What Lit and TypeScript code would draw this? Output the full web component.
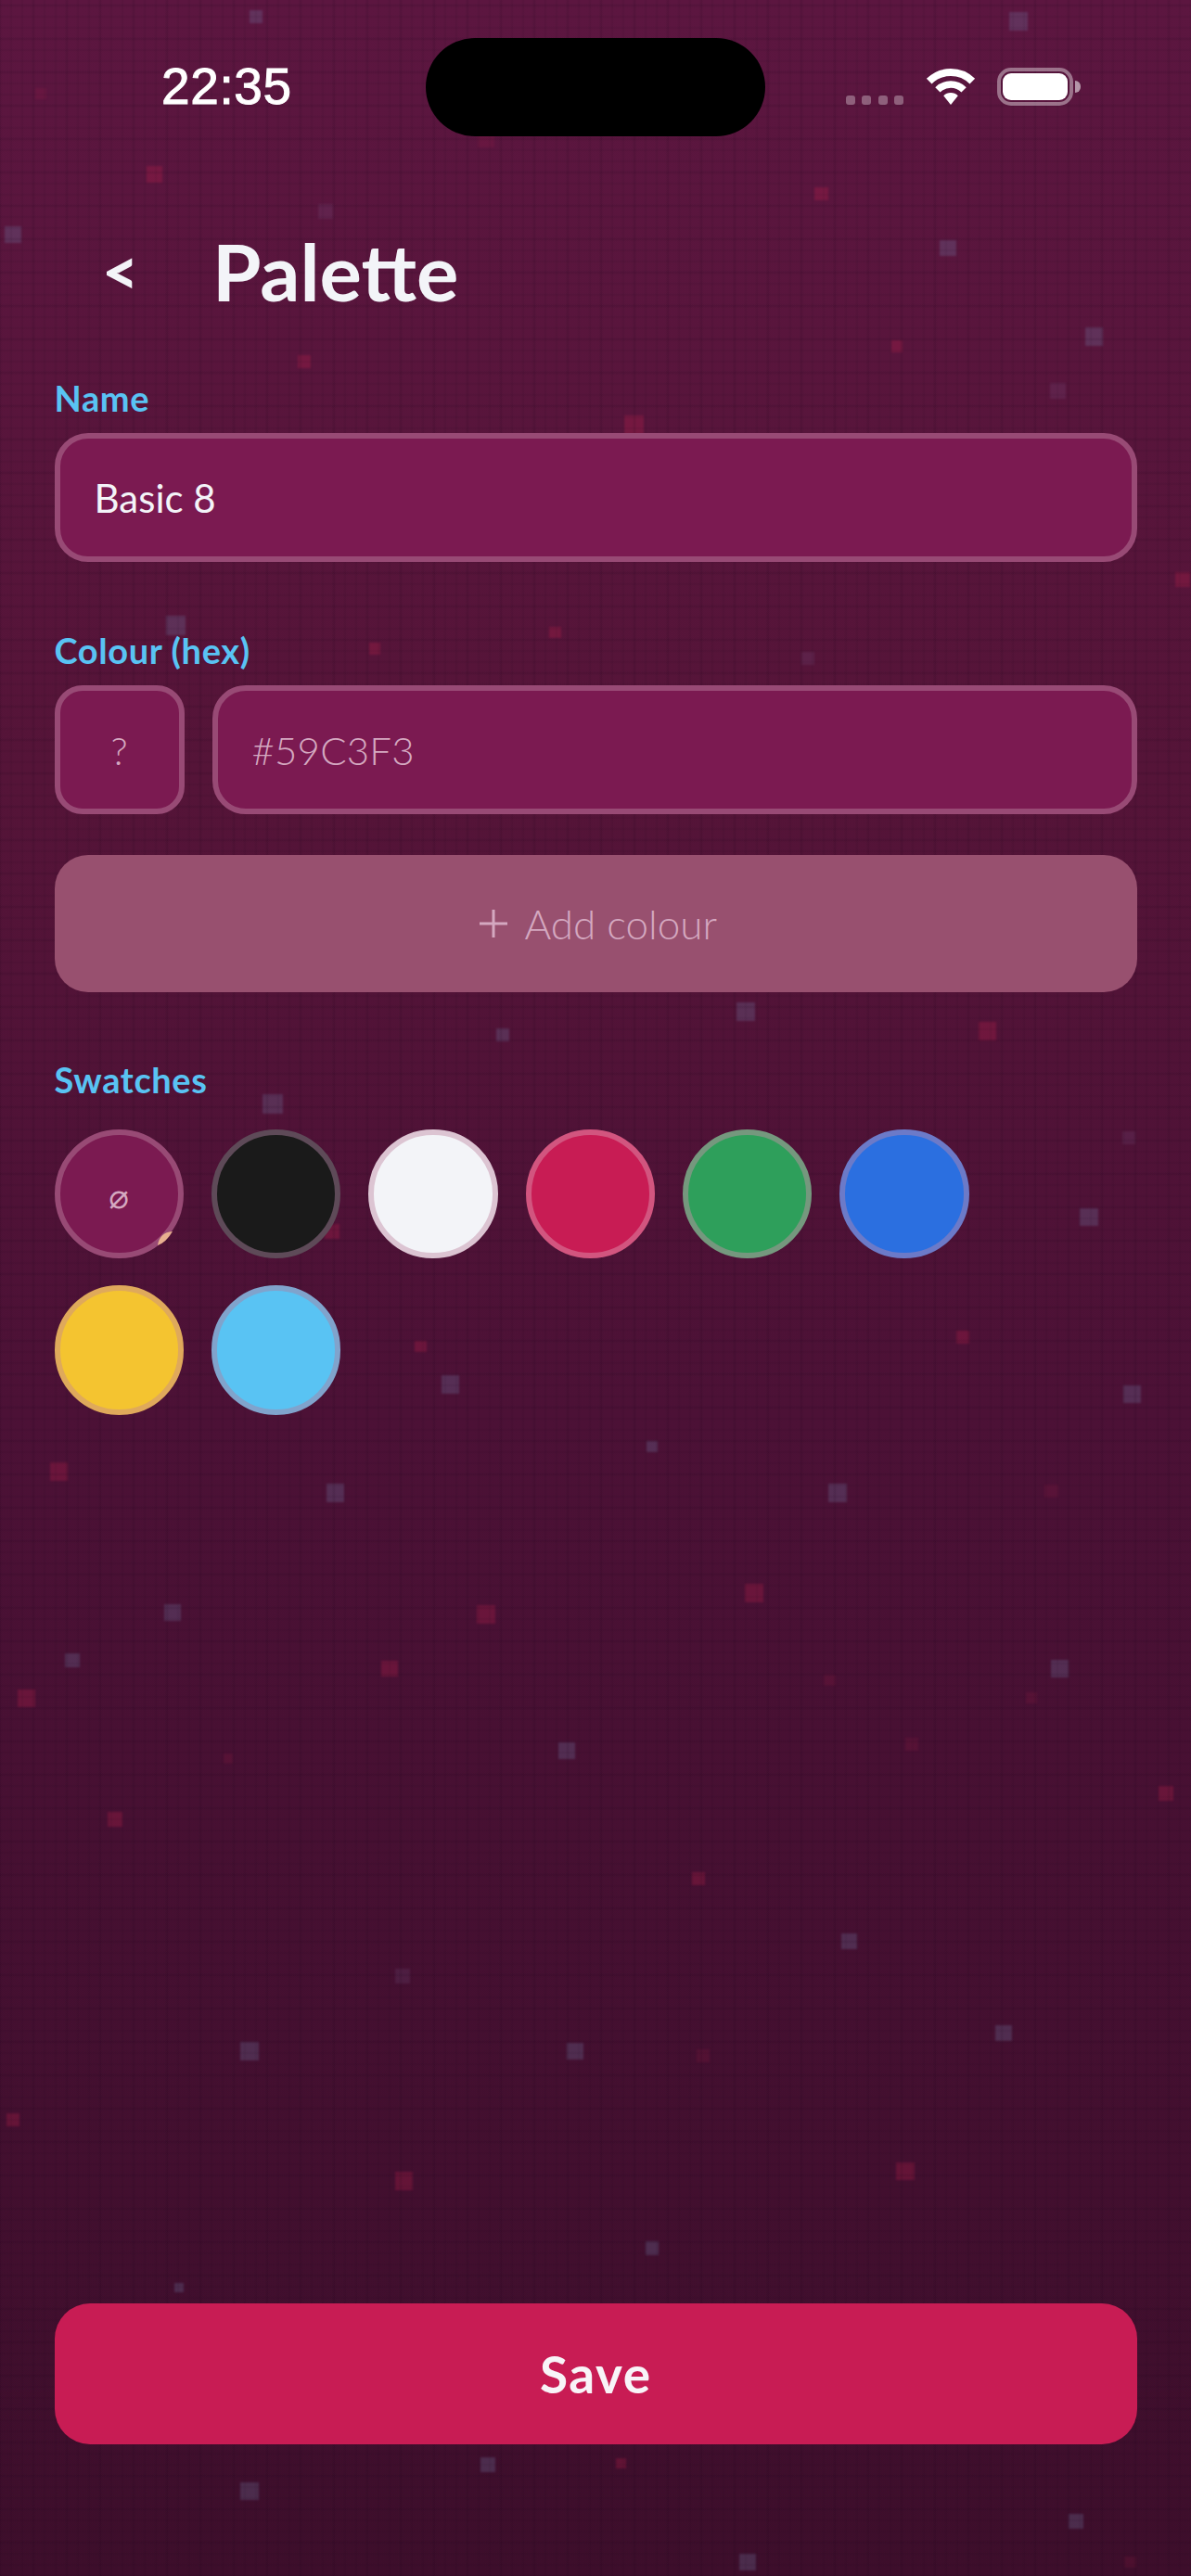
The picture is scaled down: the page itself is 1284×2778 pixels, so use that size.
import { LitElement, html, css, svg } from 'lit';
import { customElement } from 'lit/decorators.js';

// decorative squares: x, y, size as read off the 725px wide reference, then kind
const SCALE = 1284 / 725;
type Dot = [number, number, number, 'b' | 'r' | 'fb' | 'fr'];
const DOTS: Dot[] = [
  [156, 10, 8, 'b'], [620, 13, 11, 'b'], [8, 143, 10, 'b'], [577, 151, 10, 'b'], [666, 205, 11, 'b'],
  [644, 238, 10, 'fb'], [198, 129, 9, 'fb'], [107, 381, 12, 'b'], [454, 616, 11, 'b'], [306, 630, 8, 'b'],
  [166, 672, 12, 'b'], [663, 741, 11, 'b'], [689, 849, 11, 'b'], [274, 843, 11, 'b'], [397, 881, 7, 'b'],
  [204, 909, 11, 'b'], [510, 909, 11, 'b'], [105, 982, 10, 'b'], [44, 1011, 9, 'b'], [645, 1016, 11, 'b'],
  [345, 1066, 10, 'b'], [517, 1182, 10, 'b'], [152, 1249, 11, 'b'], [350, 1249, 10, 'b'], [611, 1238, 10, 'b'],
  [245, 1203, 9, 'fb'], [397, 1369, 8, 'b'], [109, 1393, 6, 'b'], [297, 1501, 9, 'b'], [152, 1517, 11, 'b'],
  [655, 1535, 9, 'b'], [455, 1560, 10, 'b'], [687, 693, 8, 'fb'], [492, 401, 8, 'fb'], [295, 52, 7, 'fb'],
  [25, 57, 7, 'fr'], [94, 106, 10, 'r'], [296, 85, 10, 'fr'], [500, 118, 8, 'r'], [546, 211, 7, 'r'],
  [185, 220, 8, 'r'], [386, 259, 12, 'r'], [720, 353, 9, 'r'], [228, 395, 7, 'r'], [338, 385, 7, 'r'],
  [601, 628, 11, 'r'], [586, 814, 8, 'r'], [256, 820, 7, 'r'], [36, 896, 11, 'r'], [459, 970, 11, 'r'],
  [296, 983, 11, 'r'], [237, 1016, 10, 'r'], [16, 1034, 11, 'r'], [139, 1071, 6, 'fr'], [70, 1108, 9, 'r'],
  [710, 1092, 9, 'r'], [425, 1144, 8, 'r'], [8, 1291, 8, 'r'], [246, 1328, 11, 'r'], [551, 1322, 11, 'r'],
  [378, 1500, 6, 'r'], [505, 1023, 7, 'fr'], [555, 1062, 8, 'fr'], [628, 1034, 7, 'fr'], [428, 1252, 8, 'fr'],
  [640, 908, 8, 'fr'], [202, 750, 9, 'r'], [688, 1560, 7, 'fr'],
];

const SWATCHES = [
  { fill: '#7b1a51', ring: '#984a75', empty: true },
  { fill: '#1a1a1a', ring: '#5e4a58' },
  { fill: '#f3f4f8', ring: '#dcc4d2' },
  { fill: '#c81c54', ring: '#d2557f' },
  { fill: '#2e9f5b', ring: '#75987e' },
  { fill: '#2b6fe0', ring: '#6c7ac8' },
  { fill: '#f4c430', ring: '#dfa95b' },
  { fill: '#59c3f3', ring: '#80a3cc' },
];

@customElement('app-root')
class AppRoot extends LitElement {
  static styles = css`
    :host {
      display: block;
      width: 1284px;
      height: 2778px;
      font-family: Lato, 'Noto Sans', sans-serif;
    }

    .page {
      position: relative;
      display: flex;
      flex-direction: column;
      width: 1284px;
      height: 2778px;
      overflow: hidden;
      background: linear-gradient(180deg, #5c1640 0%, #551438 30%, #4c1136 55%, #3d0e2b 100%);
    }

    .scatter {
      position: absolute;
      inset: 0;
    }

    .dot {
      position: absolute;
      filter: blur(0.8px);
    }

    .dot.b {
      background: rgba(115, 130, 175, 0.26);
    }

    .dot.fb {
      background: rgba(150, 130, 190, 0.12);
    }

    .dot.r {
      background: rgba(205, 35, 80, 0.25);
    }

    .dot.fr {
      background: rgba(205, 35, 80, 0.11);
    }

    .mesh {
      position: absolute;
      inset: 0;
      background-image:
        repeating-linear-gradient(90deg, rgba(25, 0, 25, 0.08) 0, transparent 2px, transparent 10px, rgba(25, 0, 25, 0.08) 12px),
        repeating-linear-gradient(0deg, rgba(25, 0, 25, 0.08) 0, transparent 2px, transparent 10px, rgba(25, 0, 25, 0.08) 12px),
        repeating-linear-gradient(90deg, rgba(25, 0, 25, 0.05) 0, transparent 3px, transparent 33px, rgba(25, 0, 25, 0.05) 36px),
        repeating-linear-gradient(0deg, rgba(25, 0, 25, 0.05) 0, transparent 3px, transparent 33px, rgba(25, 0, 25, 0.05) 36px);
    }

    .status,
    .content,
    .top {
      position: relative;
    }

    .status {
      display: flex;
      align-items: flex-start;
      height: 236px;
      box-sizing: border-box;
      padding: 73px 119px 0 174px;
      color: #fff;
    }

    .time {
      font-family: 'Liberation Sans', sans-serif;
      font-size: 55px;
      line-height: 41px;
      font-weight: 400;
      letter-spacing: 0.6px;
      -webkit-text-stroke: 1px #fff;
    }

    .island {
      position: absolute;
      left: 459px;
      top: 41px;
      width: 366px;
      height: 106px;
      border-radius: 53px;
      background: #000;
    }

    .cell {
      display: flex;
      gap: 7.5px;
      margin: 30px 23px 0 auto;
    }

    .cell i {
      width: 10px;
      height: 10px;
      border-radius: 3px;
      background: rgba(255, 255, 255, 0.32);
    }

    .wifi {
      display: block;
      width: 56px;
      height: 40px;
      margin-right: 22px;
    }

    .battery {
      display: flex;
      align-items: center;
    }

    .battery-body {
      box-sizing: border-box;
      width: 82px;
      height: 41px;
      padding: 2px;
      border: 4px solid rgba(255, 255, 255, 0.4);
      border-radius: 15px;
    }

    .battery-body div {
      height: 100%;
      border-radius: 9px;
      background: #fff;
    }

    .battery-nub {
      width: 6px;
      height: 13px;
      margin-left: 2px;
      border-radius: 0 6px 6px 0;
      background: rgba(255, 255, 255, 0.55);
    }

    .top {
      display: flex;
      align-items: center;
      height: 112px;
      padding-left: 110px;
      color: #f3f4f8;
    }

    .back {
      width: 119px;
      font-size: 68px;
      font-weight: 900;
      line-height: 112px;
    }

    h1 {
      margin: 0;
      font-size: 85px;
      font-weight: 700;
      line-height: 112px;
    }

    .content {
      display: flex;
      flex: 1;
      flex-direction: column;
      padding: 60px 58px 142px 58.5px;
    }

    .label {
      height: 44px;
      margin-bottom: 15px;
      color: #59c3f3;
      font-size: 38px;
      font-weight: 700;
      letter-spacing: 0.6px;
      line-height: 42px;
    }

    .label.next {
      margin-top: 74px;
    }

    .label.swatches {
      margin-top: 73px;
      margin-bottom: 31px;
    }

    .field {
      box-sizing: border-box;
      display: flex;
      align-items: center;
      height: 139px;
      padding: 0 37px;
      border: 6px solid #984a75;
      border-radius: 36px;
      background: #7b1a51;
      color: #f3f4f8;
      font-size: 42px;
      font-weight: 400;
    }

    .hex-row {
      display: flex;
      gap: 30px;
    }

    .preview {
      flex: none;
      justify-content: center;
      width: 140px;
      padding: 0;
      border-radius: 30px;
      color: #d4a8c0;
      font-weight: 300;
    }

    .hex {
      flex: 1;
      color: #d4a8c0;
      font-weight: 300;
      letter-spacing: 0.2px;
    }

    .add {
      display: flex;
      align-items: center;
      justify-content: center;
      gap: 18px;
      height: 148px;
      margin-top: 44px;
      padding-left: 6px;
      border-radius: 36px;
      background: #98506f;
      color: #d4a8c0;
      font-size: 44px;
      font-weight: 300;
    }

    .add svg {
      display: block;
      width: 30px;
      height: 30px;
    }

    .grid {
      display: flex;
      flex-wrap: wrap;
      gap: 29px 30px;
      padding-right: 150px;
    }

    .swatch {
      position: relative;
      box-sizing: border-box;
      display: flex;
      align-items: center;
      justify-content: center;
      width: 139.4px;
      height: 139.4px;
      padding-top: 5px;
      border: 6px solid;
      border-radius: 50%;
      color: #d4a8c0;
      font-family: 'DejaVu Sans', sans-serif;
      font-size: 36px;
      font-weight: 400;
    }

    .chip {
      position: absolute;
      left: -6px;
      top: -6px;
      width: 140px;
      height: 140px;
    }

    .save {
      display: flex;
      align-items: center;
      justify-content: center;
      height: 152px;
      margin-top: auto;
      border-radius: 38px;
      background: #c81c54;
      color: #f8f4f8;
      font-size: 55px;
      font-weight: 700;
      letter-spacing: 1.5px;
    }
  `;

  render() {
    return html`<div class="page">
      <div class="scatter">
        ${DOTS.map(
          ([x, y, size, kind]) => html`<span
            class="dot ${kind}"
            style="left:${(x - size / 2) * SCALE}px;top:${(y - size / 2) * SCALE}px;width:${size * SCALE}px;height:${size * SCALE}px"
          ></span>`,
        )}
      </div>
      <div class="mesh"></div>

      <div class="status">
        <span class="time">22:35</span>
        <div class="island"></div>
        <div class="cell"><i></i><i></i><i></i><i></i></div>
        <svg class="wifi" viewBox="0 0 56 40" fill="none" stroke="#fff">
          <path d="M4.7 14.7a33 33 0 0 1 46.6 0" stroke-width="8" />
          <path d="M13.9 23.9a20 20 0 0 1 28.2 0" stroke-width="7.5" />
          <path d="M28 40 20.2 30.2a11 11 0 0 1 15.6 0Z" fill="#fff" stroke="none" />
        </svg>
        <div class="battery">
          <div class="battery-body"><div></div></div>
          <div class="battery-nub"></div>
        </div>
      </div>

      <div class="top">
        <span class="back">&lt;</span>
        <h1>Palette</h1>
      </div>

      <div class="content">
        <div class="label">Name</div>
        <div class="field">Basic 8</div>

        <div class="label next">Colour (hex)</div>
        <div class="hex-row">
          <div class="field preview">?</div>
          <div class="field hex">#59C3F3</div>
        </div>

        <div class="add">
          <svg viewBox="0 0 30 30" fill="none" stroke="#d4a8c0" stroke-width="3">
            <path d="M15 0v30M0 15h30" />
          </svg>
          <span>Add colour</span>
        </div>

        <div class="label swatches">Swatches</div>
        <div class="grid">
          ${SWATCHES.map(
            (s) => html`<div class="swatch" style="background:${s.fill};border-color:${s.ring}">
              ${s.empty
                ? html`⌀${svg`<svg class="chip" viewBox="0 0 140 140"><path d="M127 110Q113 111 111 125Q120 122 127 110Z" fill="#e8b090" /></svg>`}`
                : ''}
            </div>`,
          )}
        </div>

        <div class="save">Save</div>
      </div>
    </div>`;
  }
}
